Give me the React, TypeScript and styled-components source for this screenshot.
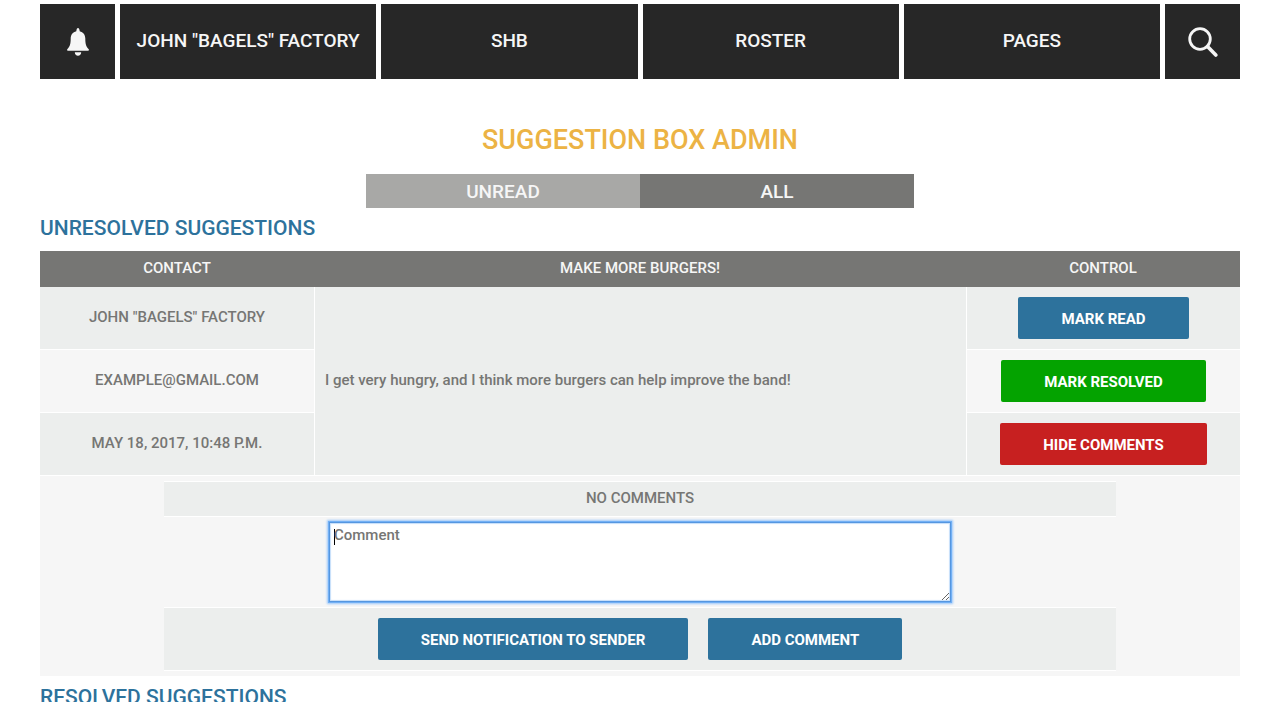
import React from "react";
import styled, { createGlobalStyle } from "styled-components";

const color = {
  dark: "#272727",
  light: "#f6f6f6",
  band: "#eceeed",
  gray: "#767674",
  grayLight: "#a8a8a6",
  blue: "#2d729c",
  green: "#04a300",
  red: "#c72020",
  gold: "#ecb344",
};

const GlobalStyle = createGlobalStyle`
  *, *::before, *::after { box-sizing: border-box; }
  body {
    margin: 0;
    background: #fff;
    color: ${color.gray};
    font: 500 15px/20px Roboto, "Liberation Sans", sans-serif;
  }
`;

const Page = styled.div`
  padding: 4px 40px 0;
`;

const Nav = styled.nav`
  display: flex;
  gap: 5px;
  height: 75px;
`;

const NavLink = styled.a`
  flex: 1 1 0;
  display: flex;
  align-items: center;
  justify-content: center;
  padding-bottom: 2px;
  background: ${color.dark};
  color: ${color.light};
  font-size: 19px;
  line-height: 24px;
  text-decoration: none;
  text-transform: uppercase;
  white-space: nowrap;
`;

const NavIcon = styled.button`
  flex: 0 0 75px;
  display: flex;
  align-items: center;
  justify-content: center;
  padding: 1px 0 0 1px;
  border: 0;
  background: ${color.dark};
  color: ${color.light};
`;

const Title = styled.h1`
  margin: 43px 0 15px;
  color: ${color.gold};
  font-size: 27px;
  font-weight: 500;
  line-height: 37px;
  text-align: center;
  text-transform: uppercase;
`;

const Tabs = styled.div`
  display: flex;
  width: 46%;
  max-width: 548px;
  margin: 0 auto;
`;

const Tab = styled.button<{ $active?: boolean }>`
  flex: 1;
  height: 34px;
  padding: 2px 0 0;
  border: 0;
  background: ${(p) => (p.$active ? color.gray : color.grayLight)};
  color: ${color.light};
  font: inherit;
  font-size: 19px;
  text-transform: uppercase;
`;

const SectionTitle = styled.h2`
  margin: 0;
  padding: 7px 0 10px;
  color: ${color.blue};
  font-size: 21px;
  font-weight: 500;
  line-height: 26px;
  text-transform: uppercase;
`;

const Table = styled.table`
  width: 100%;
  margin-bottom: 1px;
  table-layout: fixed;
  border-collapse: separate;
  border-spacing: 0;
`;

const SideCol = styled.col`
  width: 274px;
`;

const HeadCell = styled.th`
  height: 36px;
  padding: 0 10px 2px;
  background: ${color.gray};
  color: ${color.light};
  font-weight: 500;
  text-transform: uppercase;
`;

const Cell = styled.td<{ $light?: boolean }>`
  height: 63px;
  padding: 0 10px 2px;
  border-bottom: 1px solid #fff;
  background: ${(p) => (p.$light ? color.light : color.band)};
  text-align: center;
  text-transform: uppercase;
`;

const MessageCell = styled(Cell)`
  border-left: 1px solid #fff;
  text-align: left;
  text-transform: none;
`;

const ControlCell = styled(Cell)`
  padding: 0 10px;
  border-left: 1px solid #fff;
`;

const CommentsCell = styled.td`
  padding: 5px 10px;
  background: ${color.light};
`;

const Comments = styled.div`
  width: 81%;
  max-width: 952px;
  margin: 0 auto;
`;

const Band = styled.div`
  display: flex;
  align-items: center;
  justify-content: center;
  gap: 20px;
  min-height: 36px;
  padding-bottom: 2px;
  border: 1px solid #fff;
  border-width: 1px 0;
  background: ${color.band};
  text-transform: uppercase;
`;

const Actions = styled(Band)`
  padding: 10px;
`;

const CommentBox = styled.textarea`
  display: block;
  width: 65%;
  min-width: 622px;
  height: 80px;
  margin: 5px auto;
  padding: 2px 4px;
  border: 1px solid #5596e0;
  outline: 0;
  box-shadow: 0 0 0 1px #72b0f5, 0 0 2px 2px #9dc8fa, inset 0 0 1px 1px #c5defa;
  background: #fff;
  color: ${color.dark};
  caret-color: transparent;
  font: inherit;
  &:placeholder-shown {
    background: linear-gradient(#000, #000) 4px 6px / 1px 16px no-repeat #fff;
  }
  &:not(:placeholder-shown) {
    caret-color: #000;
  }
  &::placeholder {
    color: ${color.gray};
  }
`;

const Button = styled.button<{ $tone?: string }>`
  height: 42px;
  padding: 2px 43px 0;
  border: 0;
  border-radius: 2px;
  background: ${(p) => p.$tone || color.blue};
  color: #fff;
  font: inherit;
  font-weight: 700;
  text-transform: uppercase;
  white-space: nowrap;
`;

function BellIcon() {
  return (
    <svg width="22" height="28" viewBox="0 0 22 28" fill="currentColor" aria-hidden="true">
      <path d="M11 0c.8 0 1.300.8 1.500 2l.2 1.200c3.500.9 5.600 3.600 5.600 7.400 0 5.400.7 8 3.200 10.400.8.800.500 1.700-.5 1.700H1c-1 0-1.300-.9-.5-1.700 2.500-2.400 3.200-5 3.200-10.400 0-3.800 2.100-6.500 5.600-7.400L9.500 2C9.700.8 10.200 0 11 0z" />
      <path d="M7.800 24.200h6.400c0 2.100-1.400 3.500-3.200 3.500s-3.200-1.400-3.200-3.500z" />
    </svg>
  );
}

function SearchIcon() {
  return (
    <svg width="30" height="30" viewBox="0 0 30 30" fill="none" stroke="currentColor" aria-hidden="true">
      <circle cx="12" cy="12" r="10.300" strokeWidth="2.800" />
      <path d="M19.500 19.500l8.300 8.500" strokeWidth="3.600" strokeLinecap="round" />
    </svg>
  );
}

export default function App() {
  return (
    <>
      <GlobalStyle />
      <Page>
        <Nav>
          <NavIcon type="button" aria-label="Notifications">
            <BellIcon />
          </NavIcon>
          <NavLink href="#profile">John "Bagels" Factory</NavLink>
          <NavLink href="#shb">SHB</NavLink>
          <NavLink href="#roster">Roster</NavLink>
          <NavLink href="#pages">Pages</NavLink>
          <NavIcon type="button" aria-label="Search">
            <SearchIcon />
          </NavIcon>
        </Nav>

        <main>
          <Title>Suggestion Box Admin</Title>
          <Tabs>
            <Tab type="button">Unread</Tab>
            <Tab type="button" $active>All</Tab>
          </Tabs>

          <SectionTitle>Unresolved Suggestions</SectionTitle>
          <Table>
            <colgroup>
              <SideCol />
              <col />
              <SideCol />
            </colgroup>
            <thead>
              <tr>
                <HeadCell scope="col">Contact</HeadCell>
                <HeadCell scope="col">Make more burgers!</HeadCell>
                <HeadCell scope="col">Control</HeadCell>
              </tr>
            </thead>
            <tbody>
              <tr>
                <Cell>John "Bagels" Factory</Cell>
                <MessageCell rowSpan={3}>
                  I get very hungry, and I think more burgers can help improve the band!
                </MessageCell>
                <ControlCell><Button type="button">Mark Read</Button></ControlCell>
              </tr>
              <tr>
                <Cell $light>example@gmail.com</Cell>
                <ControlCell $light><Button type="button" $tone={color.green}>Mark Resolved</Button></ControlCell>
              </tr>
              <tr>
                <Cell>May 18, 2017, 10:48 p.m.</Cell>
                <ControlCell><Button type="button" $tone={color.red}>Hide Comments</Button></ControlCell>
              </tr>
              <tr>
                <CommentsCell colSpan={3}>
                  <Comments>
                    <Band>No Comments</Band>
                    <CommentBox aria-label="Comment" placeholder="Comment" autoFocus />
                    <Actions>
                      <Button type="button">Send Notification to Sender</Button>
                      <Button type="button">Add Comment</Button>
                    </Actions>
                  </Comments>
                </CommentsCell>
              </tr>
            </tbody>
          </Table>

          <SectionTitle>Resolved Suggestions</SectionTitle>
        </main>
      </Page>
    </>
  );
}
